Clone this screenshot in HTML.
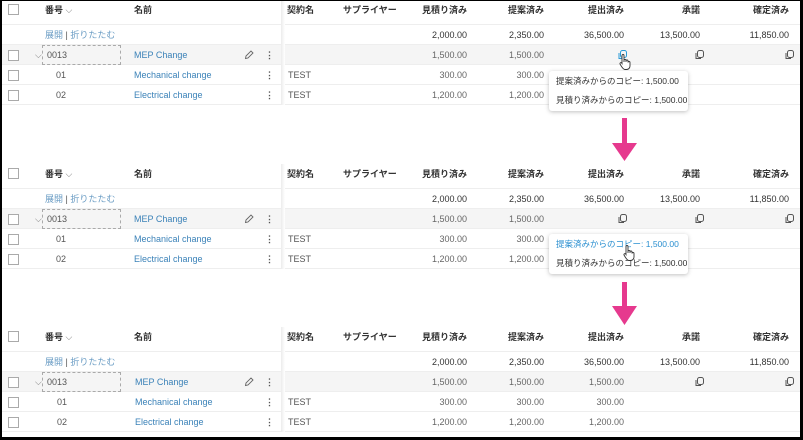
<!DOCTYPE html>
<html><head><meta charset="utf-8">
<style>
*{margin:0;padding:0;box-sizing:border-box}
body{width:803px;height:440px;overflow:hidden;background:#fff;position:relative;font-family:"Liberation Sans","Noto Sans CJK JP",sans-serif;font-size:9px;color:#444}
.frame{position:absolute;left:0;top:0;width:803px;height:440px;border-top:1px solid #000;border-left:2px solid #000;border-right:3px solid #000;border-bottom:3px solid #000;z-index:50;pointer-events:none}
.p{position:absolute;left:0;width:800px;height:105px}
.p div,.p span{position:absolute}
.hd{top:0;height:25px;width:800px;border-bottom:1px solid #eee}
.row{left:0;width:800px;height:20px;border-bottom:1px solid #eee}
.par{background:#f5f5f5}
.t{line-height:20px;white-space:nowrap}
.h{font-weight:bold;color:#333;top:0}
.r{text-align:right}
.cb{width:11px;height:11px;border:1px solid #aaa;background:#fff;left:8px}
.blue{color:#3b82b8}
.sep{left:281px;top:0;width:4px;height:105px;background:linear-gradient(to right,#ececec,#fff)}
.dots{font-weight:bold;color:#555;left:265px}
.copy{width:9px;height:10px}
.pen{left:244px;width:10px;height:10px}
</style></head><body>
<div class="frame"></div>

<div class="p" style="top:0">
 <div class="hd"></div>
 <div class="cb" style="top:4px"></div>
 <div class="t h" style="left:45px">番号 <span style="position:static;font-weight:normal;color:#777">⌵</span></div>
 <div class="t h" style="left:134px">名前</div>
 <div class="t h" style="left:287px">契約名</div>
 <div class="t h" style="left:343px">サプライヤー</div>
 <div class="t h r" style="right:333px">見積り済み</div>
 <div class="t h r" style="right:256px">提案済み</div>
 <div class="t h r" style="right:176px">提出済み</div>
 <div class="t h r" style="right:100px">承諾</div>
 <div class="t h r" style="right:11px">確定済み</div>
 <div class="row" style="top:25px"></div>
 <div class="row par" style="top:45px"></div>
 <div class="row" style="top:65px"></div>
 <div class="row" style="top:85px"></div>
 <div class="t blue" style="top:25px;left:45px;color:#6a9cc4">展開 <span style="position:static;color:#555">|</span> 折りたたむ</div>
 <div class="t r" style="top:25px;right:333px;color:#333">2,000.00</div>
 <div class="t r" style="top:25px;right:256px;color:#333">2,350.00</div>
 <div class="t r" style="top:25px;right:176px;color:#333">36,500.00</div>
 <div class="t r" style="top:25px;right:100px;color:#333">13,500.00</div>
 <div class="t r" style="top:25px;right:11px;color:#333">11,850.00</div>
 <div class="cb" style="top:50px"></div>
 <div class="t" style="top:45px;left:35px;color:#777">⌵</div>
 <div style="top:45px;left:42px;width:79px;height:20px;border:1px dashed #aaa"></div>
 <div class="t" style="top:45px;left:47px;color:#555">0013</div>
 <div class="t blue" style="top:45px;left:134px">MEP Change</div>
 <div class="pen" style="top:50px"><svg width="10" height="10" viewBox="0 0 10 10"><path d="M1.5 8.5l.5-2.5 5-5 2 2-5 5z" fill="none" stroke="#666" stroke-width=".9"/></svg></div>
 <div class="t dots" style="top:45px">⋮</div>
 <div class="t r" style="top:45px;right:333px;color:#666">1,500.00</div>
 <div class="t r" style="top:45px;right:256px;color:#666">1,500.00</div>
 <div class="copy" style="top:50px;left:695px"><svg width="9" height="10" viewBox="0 0 9 10"><rect x="2.5" y="0.5" width="6" height="7" rx="2" fill="none" stroke="#555"/><path d="M1 3v5.5h5" fill="none" stroke="#555"/></svg></div>
 <div class="copy" style="top:50px;left:785px"><svg width="9" height="10" viewBox="0 0 9 10"><rect x="2.5" y="0.5" width="6" height="7" rx="2" fill="none" stroke="#555"/><path d="M1 3v5.5h5" fill="none" stroke="#555"/></svg></div>
 <div class="cb" style="top:70px"></div>
 <div class="t" style="top:65px;left:56px;color:#555">01</div>
 <div class="t blue" style="top:65px;left:134px">Mechanical change</div>
 <div class="t dots" style="top:65px">⋮</div>
 <div class="t" style="top:65px;left:288px;color:#555">TEST</div>
 <div class="t r" style="top:65px;right:333px;color:#666">300.00</div>
 <div class="t r" style="top:65px;right:256px;color:#666">300.00</div>
 <div class="cb" style="top:90px"></div>
 <div class="t" style="top:85px;left:56px;color:#555">02</div>
 <div class="t blue" style="top:85px;left:134px">Electrical change</div>
 <div class="t dots" style="top:85px">⋮</div>
 <div class="t" style="top:85px;left:288px;color:#555">TEST</div>
 <div class="t r" style="top:85px;right:333px;color:#666">1,200.00</div>
 <div class="t r" style="top:85px;right:256px;color:#666">1,200.00</div>
 <div class="sep"></div>
 <div class="copy" style="top:50px;left:618px"><svg width="9" height="10" viewBox="0 0 9 10"><rect x="2.5" y="0.5" width="6" height="7" rx="2" fill="none" stroke="#2a9bd8"/><path d="M1 3v5.5h5" fill="none" stroke="#2a9bd8"/></svg></div>
 <div style="top:54px;left:619px"><svg width="14" height="17" viewBox="0 0 14 17"><path d="M3 1.5a1 1 0 0 1 2 0V8V6.5a1 1 0 0 1 2 0V8V7a1 1 0 0 1 2 0v1.5a1 1 0 0 1 2 0V12c0 2-1.5 3.5-3.5 3.5H6C4.5 15.5 3.5 14 2.5 12.5L1 10a1 1 0 0 1 1.7-1L3 9.5z" fill="#fff" stroke="#333" stroke-width=".9"/></svg></div>
 <div style="top:71px;left:549px;width:139px;height:40px;background:#fff;border-radius:3px;box-shadow:0 1px 4px rgba(0,0,0,.25)">
  <div class="t" style="left:7px;top:0;color:#333;font-size:8.5px">提案済みからのコピー: 1,500.00</div>
  <div class="t" style="left:7px;top:19px;color:#333;font-size:8.5px">見積り済みからのコピー: 1,500.00</div>
 </div>
</div>

<div class="p" style="top:164px">
 <div class="hd"></div>
 <div class="cb" style="top:4px"></div>
 <div class="t h" style="left:45px">番号 <span style="position:static;font-weight:normal;color:#777">⌵</span></div>
 <div class="t h" style="left:134px">名前</div>
 <div class="t h" style="left:287px">契約名</div>
 <div class="t h" style="left:343px">サプライヤー</div>
 <div class="t h r" style="right:333px">見積り済み</div>
 <div class="t h r" style="right:256px">提案済み</div>
 <div class="t h r" style="right:176px">提出済み</div>
 <div class="t h r" style="right:100px">承諾</div>
 <div class="t h r" style="right:11px">確定済み</div>
 <div class="row" style="top:25px"></div>
 <div class="row par" style="top:45px"></div>
 <div class="row" style="top:65px"></div>
 <div class="row" style="top:85px"></div>
 <div class="t blue" style="top:25px;left:45px;color:#6a9cc4">展開 <span style="position:static;color:#555">|</span> 折りたたむ</div>
 <div class="t r" style="top:25px;right:333px;color:#333">2,000.00</div>
 <div class="t r" style="top:25px;right:256px;color:#333">2,350.00</div>
 <div class="t r" style="top:25px;right:176px;color:#333">36,500.00</div>
 <div class="t r" style="top:25px;right:100px;color:#333">13,500.00</div>
 <div class="t r" style="top:25px;right:11px;color:#333">11,850.00</div>
 <div class="cb" style="top:50px"></div>
 <div class="t" style="top:45px;left:35px;color:#777">⌵</div>
 <div style="top:45px;left:42px;width:79px;height:20px;border:1px dashed #aaa"></div>
 <div class="t" style="top:45px;left:47px;color:#555">0013</div>
 <div class="t blue" style="top:45px;left:134px">MEP Change</div>
 <div class="pen" style="top:50px"><svg width="10" height="10" viewBox="0 0 10 10"><path d="M1.5 8.5l.5-2.5 5-5 2 2-5 5z" fill="none" stroke="#666" stroke-width=".9"/></svg></div>
 <div class="t dots" style="top:45px">⋮</div>
 <div class="t r" style="top:45px;right:333px;color:#666">1,500.00</div>
 <div class="t r" style="top:45px;right:256px;color:#666">1,500.00</div>
 <div class="copy" style="top:50px;left:618px"><svg width="9" height="10" viewBox="0 0 9 10"><rect x="2.5" y="0.5" width="6" height="7" rx="2" fill="none" stroke="#555"/><path d="M1 3v5.5h5" fill="none" stroke="#555"/></svg></div>
 <div class="copy" style="top:50px;left:695px"><svg width="9" height="10" viewBox="0 0 9 10"><rect x="2.5" y="0.5" width="6" height="7" rx="2" fill="none" stroke="#555"/><path d="M1 3v5.5h5" fill="none" stroke="#555"/></svg></div>
 <div class="copy" style="top:50px;left:785px"><svg width="9" height="10" viewBox="0 0 9 10"><rect x="2.5" y="0.5" width="6" height="7" rx="2" fill="none" stroke="#555"/><path d="M1 3v5.5h5" fill="none" stroke="#555"/></svg></div>
 <div class="cb" style="top:70px"></div>
 <div class="t" style="top:65px;left:56px;color:#555">01</div>
 <div class="t blue" style="top:65px;left:134px">Mechanical change</div>
 <div class="t dots" style="top:65px">⋮</div>
 <div class="t" style="top:65px;left:288px;color:#555">TEST</div>
 <div class="t r" style="top:65px;right:333px;color:#666">300.00</div>
 <div class="t r" style="top:65px;right:256px;color:#666">300.00</div>
 <div class="cb" style="top:90px"></div>
 <div class="t" style="top:85px;left:56px;color:#555">02</div>
 <div class="t blue" style="top:85px;left:134px">Electrical change</div>
 <div class="t dots" style="top:85px">⋮</div>
 <div class="t" style="top:85px;left:288px;color:#555">TEST</div>
 <div class="t r" style="top:85px;right:333px;color:#666">1,200.00</div>
 <div class="t r" style="top:85px;right:256px;color:#666">1,200.00</div>
 <div class="sep"></div>
 <div style="top:70px;left:549px;width:139px;height:40px;background:#fff;border-radius:3px;box-shadow:0 1px 4px rgba(0,0,0,.25)">
  <div class="t" style="left:7px;top:0;color:#2a8fd0;font-size:8.5px">提案済みからのコピー: 1,500.00</div>
  <div class="t" style="left:7px;top:19px;color:#333;font-size:8.5px">見積り済みからのコピー: 1,500.00</div>
 </div>
 <div style="top:81px;left:623px"><svg width="14" height="17" viewBox="0 0 14 17"><path d="M3 1.5a1 1 0 0 1 2 0V8V6.5a1 1 0 0 1 2 0V8V7a1 1 0 0 1 2 0v1.5a1 1 0 0 1 2 0V12c0 2-1.5 3.5-3.5 3.5H6C4.5 15.5 3.5 14 2.5 12.5L1 10a1 1 0 0 1 1.7-1L3 9.5z" fill="#fff" stroke="#333" stroke-width=".9"/></svg></div>
</div>

<div class="p" style="top:327px">
 <div class="hd"></div>
 <div class="cb" style="top:4px"></div>
 <div class="t h" style="left:45px">番号 <span style="position:static;font-weight:normal;color:#777">⌵</span></div>
 <div class="t h" style="left:134px">名前</div>
 <div class="t h" style="left:287px">契約名</div>
 <div class="t h" style="left:343px">サプライヤー</div>
 <div class="t h r" style="right:333px">見積り済み</div>
 <div class="t h r" style="right:256px">提案済み</div>
 <div class="t h r" style="right:176px">提出済み</div>
 <div class="t h r" style="right:100px">承諾</div>
 <div class="t h r" style="right:11px">確定済み</div>
 <div class="row" style="top:25px"></div>
 <div class="row par" style="top:45px"></div>
 <div class="row" style="top:65px"></div>
 <div class="row" style="top:85px"></div>
 <div class="t blue" style="top:25px;left:45px;color:#6a9cc4">展開 <span style="position:static;color:#555">|</span> 折りたたむ</div>
 <div class="t r" style="top:25px;right:333px;color:#333">2,000.00</div>
 <div class="t r" style="top:25px;right:256px;color:#333">2,350.00</div>
 <div class="t r" style="top:25px;right:176px;color:#333">36,500.00</div>
 <div class="t r" style="top:25px;right:100px;color:#333">13,500.00</div>
 <div class="t r" style="top:25px;right:11px;color:#333">11,850.00</div>
 <div class="cb" style="top:50px"></div>
 <div class="t" style="top:45px;left:35px;color:#777">⌵</div>
 <div style="top:45px;left:42px;width:79px;height:20px;border:1px dashed #aaa"></div>
 <div class="t" style="top:45px;left:47px;color:#555">0013</div>
 <div class="t blue" style="top:45px;left:135px">MEP Change</div>
 <div class="pen" style="top:50px"><svg width="10" height="10" viewBox="0 0 10 10"><path d="M1.5 8.5l.5-2.5 5-5 2 2-5 5z" fill="none" stroke="#666" stroke-width=".9"/></svg></div>
 <div class="t dots" style="top:45px">⋮</div>
 <div class="t r" style="top:45px;right:333px;color:#666">1,500.00</div>
 <div class="t r" style="top:45px;right:256px;color:#666">1,500.00</div>
 <div class="t r" style="top:45px;right:176px;color:#666">1,500.00</div>
 <div class="copy" style="top:50px;left:695px"><svg width="9" height="10" viewBox="0 0 9 10"><rect x="2.5" y="0.5" width="6" height="7" rx="2" fill="none" stroke="#555"/><path d="M1 3v5.5h5" fill="none" stroke="#555"/></svg></div>
 <div class="copy" style="top:50px;left:785px"><svg width="9" height="10" viewBox="0 0 9 10"><rect x="2.5" y="0.5" width="6" height="7" rx="2" fill="none" stroke="#555"/><path d="M1 3v5.5h5" fill="none" stroke="#555"/></svg></div>
 <div class="cb" style="top:70px"></div>
 <div class="t" style="top:65px;left:57px;color:#555">01</div>
 <div class="t blue" style="top:65px;left:135px">Mechanical change</div>
 <div class="t dots" style="top:65px">⋮</div>
 <div class="t" style="top:65px;left:288px;color:#555">TEST</div>
 <div class="t r" style="top:65px;right:333px;color:#666">300.00</div>
 <div class="t r" style="top:65px;right:256px;color:#666">300.00</div>
 <div class="t r" style="top:65px;right:176px;color:#666">300.00</div>
 <div class="cb" style="top:90px"></div>
 <div class="t" style="top:85px;left:57px;color:#555">02</div>
 <div class="t blue" style="top:85px;left:135px">Electrical change</div>
 <div class="t dots" style="top:85px">⋮</div>
 <div class="t" style="top:85px;left:288px;color:#555">TEST</div>
 <div class="t r" style="top:85px;right:333px;color:#666">1,200.00</div>
 <div class="t r" style="top:85px;right:256px;color:#666">1,200.00</div>
 <div class="t r" style="top:85px;right:176px;color:#666">1,200.00</div>
 <div class="sep"></div>
</div>

<svg style="position:absolute;left:0;top:0" width="803" height="440">
 <rect x="622" y="118" width="5" height="26" fill="#e6398e"/>
 <polygon points="612,143 637,143 624.5,161" fill="#e6398e"/>
 <rect x="622" y="282" width="5" height="26" fill="#e6398e"/>
 <polygon points="612,306 637,306 624.5,325" fill="#e6398e"/>
</svg>
</body></html>
